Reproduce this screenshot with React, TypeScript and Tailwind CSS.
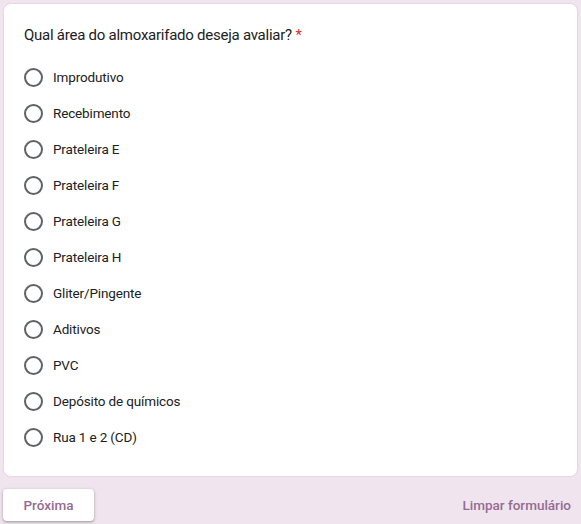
const options = [
  'Improdutivo',
  'Recebimento',
  'Prateleira E',
  'Prateleira F',
  'Prateleira G',
  'Prateleira H',
  'Gliter/Pingente',
  'Aditivos',
  'PVC',
  'Depósito de químicos',
  'Rua 1 e 2 (CD)',
]

export default function App() {
  return (
    <main className="min-h-[524px] bg-[#f0e5ee] px-[3px] pt-[3px] font-['Roboto',sans-serif] text-[#202124]">
      <div className="rounded-lg border border-[#e3d9e1] bg-white px-[20px] pt-[19px] pb-[21px]">
        <p className="text-[15px] leading-6 tracking-[-0.25px]">
          Qual área do almoxarifado deseja avaliar? <span className="text-[#d93025]">*</span>
        </p>
        <div className="mt-3">
          {options.map((o) => (
            <label key={o} className="flex h-9 items-center">
              <span className="h-[19px] w-[19px] shrink-0 rounded-full border-2 border-[#5f6368]" />
              <span className="ml-[10px] text-[13.5px] tracking-[-0.15px]">{o}</span>
            </label>
          ))}
        </div>
      </div>

      <div className="mt-3 flex items-center justify-between pr-[7px]">
        <button className="h-8 w-[91px] rounded bg-white text-[13.5px] font-medium text-[#956b94] shadow-[0_1px_2px_rgba(60,64,67,0.3),0_1px_3px_1px_rgba(60,64,67,0.15)]">
          Próxima
        </button>
        <span className="text-[13.5px] font-medium text-[#956b94]">Limpar formulário</span>
      </div>
    </main>
  )
}
